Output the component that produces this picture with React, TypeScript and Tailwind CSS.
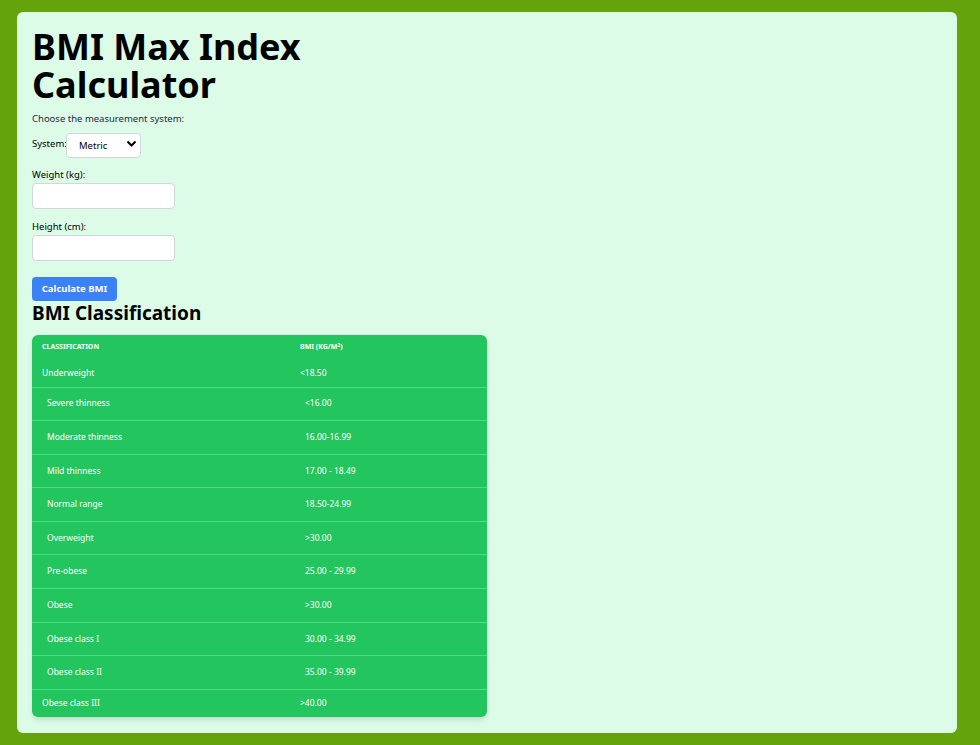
import React from "react";

const rows = [
  { name: "Underweight", value: "<18.50", sub: false },
  { name: "Severe thinness", value: "<16.00", sub: true },
  { name: "Moderate thinness", value: "16.00-16.99", sub: true },
  { name: "Mild thinness", value: "17.00 - 18.49", sub: true },
  { name: "Normal range", value: "18.50-24.99", sub: true },
  { name: "Overweight", value: ">30.00", sub: true },
  { name: "Pre-obese", value: "25.00 - 29.99", sub: true },
  { name: "Obese", value: ">30.00", sub: true },
  { name: "Obese class I", value: "30.00 - 34.99", sub: true },
  { name: "Obese class II", value: "35.00 - 39.99", sub: true },
  { name: "Obese class III", value: ">40.00", sub: false },
];

const App = () => {
  return (
    <div
      className="min-h-screen bg-[#65a30d] pl-[17px] pr-[23px] py-3"
      style={{ fontFamily: '"Noto Sans", sans-serif' }}
    >
      <div className="rounded-md bg-[#dcfce7] px-[15px] pt-4 pb-4">
        <h1 className="text-[36px] font-bold leading-[38px] text-black">
          BMI Max Index
          <br />
          Calculator
        </h1>
        <p className="mt-2 text-[9.5px] leading-[14px] text-gray-800">
          Choose the measurement system:
        </p>

        <div className="mt-[6px] flex h-[25px] items-center">
          <label htmlFor="system" className="w-[34px] text-[9.5px] text-black">
            System:
          </label>
          <div className="relative">
            <select
              id="system"
              className="h-[25px] w-[75px] appearance-none rounded border border-gray-300 bg-white pl-3 text-[9.5px] text-black"
            >
              <option>Metric</option>
            </select>
            <svg
              className="pointer-events-none absolute right-[4px] top-[8px]"
              width="11"
              height="9"
              viewBox="0 0 11 9"
            >
              <path
                d="M1.5 2.5 L5.5 6.5 L9.5 2.5"
                fill="none"
                stroke="#000"
                strokeWidth="2"
              />
            </svg>
          </div>
        </div>

        <div className="mt-[11px]">
          <label
            htmlFor="weight"
            className="block text-[9.5px] leading-[14px] text-black"
          >
            Weight (kg):
          </label>
          <input
            id="weight"
            type="text"
            className="mt-px block h-[26px] w-[143px] rounded border border-gray-300 bg-white"
          />
        </div>

        <div className="mt-[11px]">
          <label
            htmlFor="height"
            className="block text-[9.5px] leading-[14px] text-black"
          >
            Height (cm):
          </label>
          <input
            id="height"
            type="text"
            className="mt-px block h-[26px] w-[143px] rounded border border-gray-300 bg-white"
          />
        </div>

        <button className="mt-4 block h-6 w-[85px] rounded-sm bg-[#3b82f6] text-[9.5px] font-bold text-white">
          Calculate BMI
        </button>

        <h2 className="text-[19px] font-bold leading-[24px] text-black">
          BMI Classification
        </h2>

        <div className="mt-[10px] w-[455px] overflow-hidden rounded-md bg-[#22c55e] shadow-md">
          <table className="w-full border-collapse text-left text-white">
            <thead>
              <tr className="h-[25px] text-[7px] font-bold uppercase">
                <th className="w-[258px] px-2.5">Classification</th>
                <th className="px-2.5">
                  BMI (kg/m<sup>2</sup>)
                </th>
              </tr>
            </thead>
            <tbody>
              {rows.map((r, i) => (
                <tr
                  key={r.name}
                  className={`text-[8.5px] ${i > 0 ? "border-t border-[#4ade80]" : ""} ${
                    r.sub ? "h-[33.6px]" : i === 0 ? "h-[27px]" : "h-[28px]"
                  }`}
                >
                  <td className={r.sub ? "pl-[15px]" : "pl-2.5"}>{r.name}</td>
                  <td className={r.sub ? "pl-[15px]" : "pl-2.5"}>{r.value}</td>
                </tr>
              ))}
            </tbody>
          </table>
        </div>
      </div>
    </div>
  );
};

export default App;
